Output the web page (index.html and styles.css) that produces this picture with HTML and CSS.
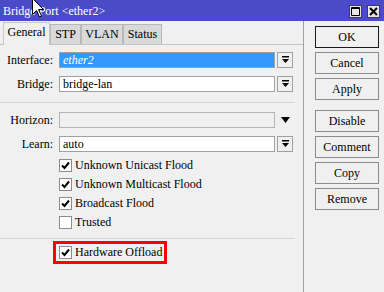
FILE: index.html
```html
<!DOCTYPE html>
<html>
<head>
<meta charset="utf-8">
<link rel="stylesheet" href="styles.css">
</head>
<body>
<div class="window">
  <div class="titlebar">
    <span class="title">Bridge Port &lt;ether2&gt;</span>
    <div class="tb-btns">
      <span class="tb-btn"><svg width="9" height="9" viewBox="0 0 9 9"><path d="M0.5 0.5h8v8h-8z M0.5 1.5h8" fill="none" stroke="#000" stroke-width="1"/></svg></span>
      <span class="tb-btn"><svg width="9" height="9" viewBox="0 0 9 9"><path d="M1 1L8 8M8 1L1 8" stroke="#000" stroke-width="2"/></svg></span>
    </div>
  </div>
  <div class="main">
    <div class="left">
      <div class="tabs">
        <div class="tab active t-general">General</div>
        <div class="tab t-stp">STP</div>
        <div class="tab t-vlan">VLAN</div>
        <div class="tab t-status">Status</div>
      </div>
      <div class="panel">
        <div class="row gap">
          <span class="label">Interface:</span>
          <div class="field selected">ether2</div>
          <div class="dd"><svg width="7" height="8" viewBox="0 0 7 8"><path d="M0 0h7v1.5H0z M0 3h7L3.5 7z" fill="#000"/></svg></div>
        </div>
        <div class="row">
          <span class="label">Bridge:</span>
          <div class="field">bridge-lan</div>
          <div class="dd"><svg width="7" height="8" viewBox="0 0 7 8"><path d="M0 0h7v1.5H0z M0 3h7L3.5 7z" fill="#000"/></svg></div>
        </div>
        <div class="sep sep1"></div>
        <div class="row gap">
          <span class="label">Horizon:</span>
          <div class="field disabled"></div>
          <div class="arrow"><svg width="9" height="6" viewBox="0 0 9 6"><path d="M0 0h9L4.5 6z" fill="#000"/></svg></div>
        </div>
        <div class="row">
          <span class="label">Learn:</span>
          <div class="field">auto</div>
          <div class="dd"><svg width="7" height="8" viewBox="0 0 7 8"><path d="M0 0h7v1.5H0z M0 3h7L3.5 7z" fill="#000"/></svg></div>
        </div>
        <div class="checks">
          <div class="check"><span class="box"><svg width="11" height="11" viewBox="0 0 11 11"><path d="M2 5.5L4.5 8L9 2.5" fill="none" stroke="#000" stroke-width="2"/></svg></span><span>Unknown Unicast Flood</span></div>
          <div class="check"><span class="box"><svg width="11" height="11" viewBox="0 0 11 11"><path d="M2 5.5L4.5 8L9 2.5" fill="none" stroke="#000" stroke-width="2"/></svg></span><span>Unknown Multicast Flood</span></div>
          <div class="check"><span class="box"><svg width="11" height="11" viewBox="0 0 11 11"><path d="M2 5.5L4.5 8L9 2.5" fill="none" stroke="#000" stroke-width="2"/></svg></span><span>Broadcast Flood</span></div>
          <div class="check"><span class="box"></span><span>Trusted</span></div>
        </div>
        <div class="sep sep2"></div>
        <div class="hw">
          <div class="check"><span class="box"><svg width="11" height="11" viewBox="0 0 11 11"><path d="M2 5.5L4.5 8L9 2.5" fill="none" stroke="#000" stroke-width="2"/></svg></span><span>Hardware Offload</span></div>
        </div>
      </div>
    </div>
    <div class="buttons">
      <div class="btn default">OK</div>
      <div class="btn">Cancel</div>
      <div class="btn">Apply</div>
      <div class="btn group">Disable</div>
      <div class="btn">Comment</div>
      <div class="btn">Copy</div>
      <div class="btn">Remove</div>
    </div>
  </div>
  <svg class="cursor" width="13" height="20" viewBox="0 0 13 20"><path d="M0.5 0.5L0.5 16.5L4.5 12.5L7.5 19L9.5 18L6.5 11.5L11.5 11.5Z" fill="#fff" stroke="#000" stroke-width="1"/></svg>
</div>
</body>
</html>
```

FILE: styles.css
```css
body {
  margin: 0;
  background: #f0f0f0;
  font-family: "Liberation Serif", "Times New Roman", serif;
  font-size: 12px;
  color: #000;
}
.window {
  width: 384px;
  height: 292px;
  overflow: hidden;
  position: relative;
  background: #f0f0f0;
}
.titlebar {
  height: 21px;
  background: #4b4bc8;
  display: flex;
  align-items: center;
  justify-content: space-between;
  padding: 0 4px 0 3px;
  box-sizing: border-box;
  color: #fff;
  font-size: 12px;
}
.title { padding-top: 1px; }
.tb-btns {
  display: flex;
  gap: 5px;
  padding-top: 2px;
}
.tb-btn {
  width: 13px;
  height: 13px;
  box-sizing: border-box;
  border: 1px solid #404040;
  background: #e6e6e6;
  display: flex;
  align-items: center;
  justify-content: center;
}
.main {
  display: flex;
  height: 271px;
}
.left {
  width: 303px;
  border-right: 1px solid #a0a0a0;
}
.tabs {
  height: 23px;
  display: flex;
  align-items: flex-end;
  padding-left: 3px;
  box-sizing: border-box;
}
.tab {
  height: 20px;
  box-sizing: border-box;
  border: 1px solid #b8b8b8;
  border-bottom: none;
  background: #d9d9d9;
  display: flex;
  align-items: center;
  justify-content: center;
}
.tab.active {
  height: 23px;
  margin-bottom: -1px;
  background: #f0f0f0;
  border-color: #c8c8c8;
  position: relative;
  z-index: 1;
  padding-bottom: 3px;
}
.t-general { width: 47px; }
.t-stp { width: 31px; }
.t-vlan { width: 42px; }
.t-status { width: 39px; }
.panel {
  border-top: 1px solid #c4c4c4;
  padding-top: 7px;
}
.row {
  display: flex;
  align-items: center;
  height: 16px;
}
.row.gap { margin-bottom: 8px; }
.label {
  width: 53px;
  text-align: right;
  margin-right: 6px;
}
.field {
  width: 216px;
  height: 16px;
  box-sizing: border-box;
  border: 1px solid #a0a0a0;
  background: #fff;
  padding-left: 3px;
  line-height: 14px;
}
.field.selected {
  background: #3399ff;
  color: #fff;
  font-style: italic;
}
.field.disabled {
  background: #f0f0f0;
  border-color: #b4b4b4;
}
.dd {
  width: 16px;
  height: 16px;
  margin-left: 2px;
  box-sizing: border-box;
  border: 1px solid #a0a0a0;
  background: #f0f0f0;
  display: flex;
  align-items: center;
  justify-content: center;
}
.arrow {
  width: 16px;
  margin-left: 6px;
  display: flex;
  align-items: center;
}
.sep {
  height: 1px;
  background: #d6d6d6;
  margin-right: 8px;
}
.sep1 { margin-top: 10px; margin-bottom: 9px; }
.sep2 { margin-top: 9px; margin-bottom: 2px; }
.checks {
  margin-top: 7px;
  padding-left: 59px;
  display: flex;
  flex-direction: column;
  gap: 6px;
}
.check {
  display: flex;
  align-items: center;
  height: 13px;
  gap: 3px;
  white-space: nowrap;
}
.box {
  width: 13px;
  height: 13px;
  box-sizing: border-box;
  border: 1px solid #8c8c8c;
  background: #fff;
  display: flex;
  align-items: center;
  justify-content: center;
}
.hw {
  margin-left: 53px;
  width: 114px;
  box-sizing: border-box;
  border: 3px solid #f00;
  padding: 2px 3px;
}
.buttons {
  margin-left: 11px;
  padding-top: 5px;
  display: flex;
  flex-direction: column;
  gap: 4px;
}
.btn {
  width: 64px;
  height: 22px;
  box-sizing: border-box;
  border: 1px solid #8c8c8c;
  background: #f0f0f0;
  display: flex;
  align-items: center;
  justify-content: center;
}
.btn.default { border-color: #1a1a1a; }
.btn.group { margin-top: 6px; }
.cursor {
  position: absolute;
  left: 32px;
  top: -2px;
}
```
